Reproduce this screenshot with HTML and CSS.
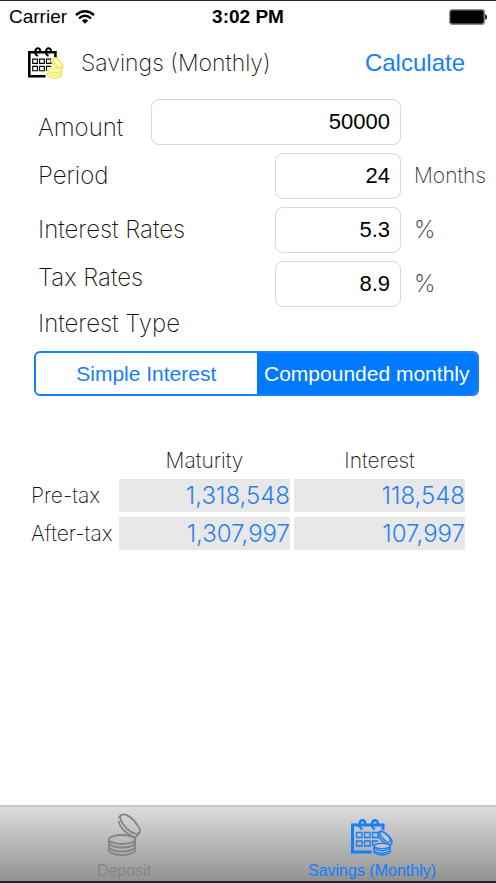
FILE: index.html
```html
<!DOCTYPE html>
<html lang="en">
<head>
  <meta charset="UTF-8">
  <meta name="viewport" content="width=device-width, initial-scale=1.0">
  <title>Savings (Monthly)</title>
  <link rel="stylesheet" href="styles.css">
</head>
<body>
  <div class="status-bar">
    <div class="carrier">
      <span>Carrier</span>
      <svg width="20" height="14" viewBox="0 0 20 14" fill="none" stroke="#000" stroke-width="2.400">
        <path d="M1 5 Q10 -2.500 19 5"/>
        <path d="M4 8.300 Q10 3.300 16 8.300"/>
        <path d="M6.800 10.600 Q10 7.900 13.200 10.600 L10 13.800 Z" fill="#000" stroke="none"/>
      </svg>
    </div>
    <div class="clock">3:02 PM</div>
    <div class="battery">
      <svg width="38" height="16" viewBox="0 0 38 16">
        <rect x="0.7" y="0.7" width="34.6" height="14.6" rx="2.5" fill="#000" stroke="#888" stroke-width="1.4"/>
        <path d="M36.2 5 Q38 5.5 38 8 Q38 10.500 36.200 11 Z" fill="#000"/>
      </svg>
    </div>
  </div>

  <form id="savingsForm">
    <header class="header">
      <svg class="logo" width="36" height="32" viewBox="0 0 42 37" fill="none">
        <g stroke="#000">
          <path d="M20.500 34 H1.500 V6 H32 V12" stroke-width="3"/>
          <path d="M11.500 10 Q8 9 8.500 5 Q9 1.200 11.500 1.200 Q14 1.200 14.500 5 M24 10 Q20.500 9 21 5 Q21.500 1.200 24 1.200 Q26.500 1.200 27 5" stroke-width="2.400"/>
          <path d="M5.500 14 h5.500 v5 h-5.500 z M13.500 14 h5.500 v5 h-5.500 z M21.500 14 h5.500 v5 h-5.500 z M5.500 22.500 h5.500 v5 h-5.500 z M13.500 22.500 h5.500 v5 h-5.500 z M27 22.500 h-5.500 v5" stroke-width="1.300"/>
        </g>
        <g stroke="#f6ea50" fill="#fffcd6" stroke-width="1.500">
          <path d="M28 13 C31 9.500 41.500 19 41 23.500 C40 27 37 26.500 34 24 C30 21 26 17 28 13 Z"/>
          <path d="M29.500 12.500 C33 12 41 19 39 23 C36 25 27 16 29.500 12.500 Z"/>
          <path d="M23 27 V33.500 Q31 38.500 39 33.500 V27"/>
          <ellipse cx="31" cy="27" rx="8" ry="2.600"/>
          <path d="M23 30.500 Q31 35 39 30.500" fill="none"/>
        </g>
      </svg>
      <h1>Savings (Monthly)</h1>
      <button type="submit" class="calculate">Calculate</button>
    </header>

    <div class="fields">
      <div class="row row-low">
        <label for="amount">Amount</label>
        <input type="text" id="amount" class="wide" value="50000">
        <span class="unit"></span>
      </div>
      <div class="row">
        <label for="period">Period</label>
        <input type="text" id="period" value="24">
        <span class="unit">Months</span>
      </div>
      <div class="row">
        <label for="interestRate">Interest Rates</label>
        <input type="text" id="interestRate" value="5.3">
        <span class="unit percent">%</span>
      </div>
      <div class="row row-high">
        <label for="taxRate">Tax Rates</label>
        <input type="text" id="taxRate" value="8.9">
        <span class="unit percent">%</span>
      </div>
    </div>

    <fieldset class="interest-type">
      <legend>Interest Type</legend>
      <div class="segments">
        <input type="radio" name="type" id="simple">
        <label for="simple">Simple Interest</label>
        <input type="radio" name="type" id="compound" checked>
        <label for="compound">Compounded monthly</label>
      </div>
    </fieldset>
  </form>

  <main class="results">
    <table>
      <thead>
        <tr><td class="corner"></td><th scope="col">Maturity</th><th scope="col">Interest</th></tr>
      </thead>
      <tbody>
        <tr><th scope="row">Pre-tax</th><td>1,318,548</td><td>118,548</td></tr>
        <tr><th scope="row">After-tax</th><td>1,307,997</td><td>107,997</td></tr>
      </tbody>
    </table>
  </main>

  <nav class="tab-bar">
    <a href="#deposit" class="tab">
      <svg width="34" height="43" viewBox="-1 0 34 43" fill="none" stroke="currentColor" stroke-width="1.800">
        <ellipse cx="14" cy="26.500" rx="13.200" ry="4.500"/>
        <path d="M0.800 26.500 V37.500 Q3.500 42 14 42 Q24.500 42 27.200 37.500 V26.500"/>
        <path d="M0.800 30 Q3.500 34.500 14 34.500 Q24.500 34.500 27.200 30 M0.800 34 Q3.500 38.500 14 38.500 Q24.500 38.500 27.200 34"/>
        <path d="M13 2 C17 -0.500 25 5 29 11.500 C32 16 33 18 31 20 C27 23 19 17 15 11 C12 7 11.500 4 13 2 Z"/>
        <path d="M13 2 L10.500 5 M10.800 8 C11 14 19 21 25 23.500 Q28 24.500 29 23 L32 19"/>
      </svg>
      <span>Deposit</span>
    </a>
    <a href="#savings" class="tab active">
      <svg width="42" height="37" viewBox="0 0 42 37" fill="none" stroke="currentColor">
        <path d="M20.500 33 H1.500 V6 H32 V11" stroke-width="3"/>
        <path d="M11.500 10 Q8 9 8.500 5 Q9 1.200 11.500 1.200 Q14 1.200 14.500 5 M24 10 Q20.500 9 21 5 Q21.500 1.200 24 1.200 Q26.500 1.200 27 5" stroke-width="2.400"/>
        <path d="M5.500 13.500 h5.500 v5 h-5.500 z M13.500 13.500 h5.500 v5 h-5.500 z M21.500 13.500 h5.500 v5 h-5.500 z M5.500 22 h5.500 v5 h-5.500 z M13.500 22 h5.500 v5 h-5.500 z M27 22 h-5.500 v5" stroke-width="1.300"/>
        <g stroke-width="1.400" fill="#c3c3c3">
          <path d="M28 13 C31 9.500 41.500 19 41 23.500 C40 27 37 26.500 34 24 C30 21 26 17 28 13 Z"/>
          <path d="M29.500 12.500 C33 12 41 19 39 23 C36 25 27 16 29.500 12.500 Z"/>
          <path d="M23 27 V33.500 Q31 38.500 39 33.500 V27"/>
          <ellipse cx="31" cy="27" rx="8" ry="2.600"/>
          <path d="M23 29.500 Q31 34 39 29.500 M23 32 Q31 36.500 39 32" fill="none"/>
        </g>
      </svg>
      <span>Savings (Monthly)</span>
    </a>
  </nav>
</body>
</html>
```
FILE: styles.css
```css
* { box-sizing: border-box; }
body {
  margin: 0; min-height: 100vh; display: flex; flex-direction: column;
  background: #fff; color: #111;
  font-family: Inter, "Liberation Sans", Arial, sans-serif; font-weight: 200;
  border-top: 1px solid #2a2a2c; border-bottom: 2px solid #222226;
}

.status-bar {
  display: flex; align-items: center; height: 32px; padding: 0 9px;
  font-family: "Liberation Sans", Arial, sans-serif; font-size: 19px; font-weight: 400; color: #000;
}
.carrier, .battery { flex: 1; display: flex; align-items: center; gap: 8px; }
.battery { justify-content: flex-end; }
.clock { font-weight: 700; }

.header { display: flex; align-items: center; height: 60px; padding: 0 31px 0 28px; }
.logo { margin-right: 17px; }
h1 { flex: 1; margin: 0; font-size: 23px; font-weight: 200; }
.calculate {
  padding: 0; border: none; background: none; color: #147efb; cursor: pointer;
  font-family: "Liberation Sans", Arial, sans-serif; font-size: 24px;
}

.fields { display: flex; flex-direction: column; gap: 8px; margin-top: 6px; padding: 0 10px 0 38px; }
.row { display: flex; align-items: center; font-size: 24px; line-height: 34px; }
.row-low { align-items: flex-end; }
.row-high { align-items: flex-start; }
.row label { flex: 1; }
.row input {
  width: 126px; height: 46px; padding: 0 10px; text-align: right;
  border: 1px solid #d8d8d8; border-radius: 8px; background: #fff; color: #000;
  font-family: "Liberation Sans", Arial, sans-serif; font-size: 22px;
}
.row input.wide { width: 250px; }
.unit { width: 72px; margin-left: 13px; align-self: center; font-size: 21px; color: #333; }
.percent { font-size: 24px; }

.interest-type { margin: 0; padding: 0 17px 0 34px; border: none; }
legend { padding: 0 4px; font-size: 24px; line-height: 34px; }
.segments { display: flex; height: 45px; margin-top: 10px; border: 2px solid #147efb; border-radius: 6px; overflow: hidden; }
.segments input { position: absolute; opacity: 0; }
.segments label {
  flex: 1; display: flex; align-items: center; justify-content: center; white-space: nowrap;
  color: #147efb; font-family: "Liberation Sans", Arial, sans-serif; font-size: 21px; font-weight: 400; cursor: pointer;
}
.segments input:checked + label { background: #007aff; color: #fff; }

.results { flex: 1; padding: 47px 27px 0; }
table { width: 100%; table-layout: fixed; border-collapse: separate; border-spacing: 4px 5px; }
th, td { height: 33px; padding: 0; font-weight: 200; font-size: 21px; line-height: 26px; white-space: nowrap; }
thead th, thead td { height: 26px; }
.corner { width: 84px; }
tbody th { text-align: left; }
tbody td { background: #e8e8e8; color: #2c80ec; text-align: right; font-size: 24px; font-weight: 300; }

.tab-bar {
  display: flex; height: 76px; border-top: 2px solid #c8c8c8;
  background: linear-gradient(#dcdcdc, #929292);
}
.tab {
  flex: 1; display: flex; flex-direction: column; align-items: center; justify-content: flex-end;
  color: #858585; text-decoration: none;
  font-family: "Liberation Sans", Arial, sans-serif; font-size: 16px; font-weight: 400; line-height: 20px;
}
.tab svg { margin-bottom: 5px; }
.tab.active { color: #147efb; }
```
